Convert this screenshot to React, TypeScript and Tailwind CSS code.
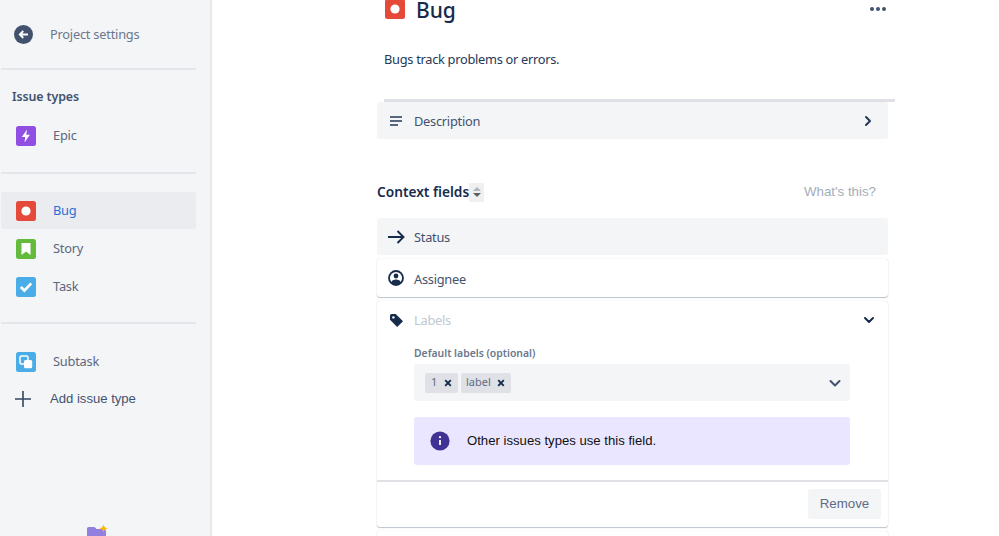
import React from "react";

const Glyph = ({ bg, children }: { bg: string; children: React.ReactNode }) => (
  <svg width="20" height="20" viewBox="0 0 20 20" className="shrink-0">
    <rect width="20" height="20" rx="2.5" fill={bg} />
    {children}
  </svg>
);

const BugIcon = () => (
  <Glyph bg="#e5493a">
    <circle cx="10" cy="10" r="4.6" fill="#fff" />
  </Glyph>
);
const EpicIcon = () => (
  <Glyph bg="#904ee2">
    <path d="M11 3.5 5.8 11h3.4l-.7 5.5 5.4-7.8h-3.6z" fill="#fff" />
  </Glyph>
);
const StoryIcon = () => (
  <Glyph bg="#63ba3c">
    <path d="M5.5 4h9v12L10 12.4 5.5 16z" fill="#fff" />
  </Glyph>
);
const TaskIcon = () => (
  <Glyph bg="#4bade8">
    <path d="m4.8 10 3.6 3.6 6.8-7.2" fill="none" stroke="#fff" strokeWidth="2.8" />
  </Glyph>
);
const SubtaskIcon = () => (
  <Glyph bg="#4bade8">
    <rect x="4" y="4" width="8" height="8" rx="1.5" fill="#4bade8" stroke="#fff" strokeWidth="1.5" />
    <rect x="8" y="8" width="8.2" height="8.2" rx="1.5" fill="#fff" />
  </Glyph>
);

const Divider = ({ className }: { className: string }) => (
  <div className={`ml-px h-[2px] w-[195px] bg-[#e4e6ec] ${className}`} />
);

const Row = ({ icon, label, active, className = "" }: { icon: React.ReactNode; label: string; active?: boolean; className?: string }) => (
  <div className={`ml-px flex h-[37px] w-[195px] items-center rounded-[3px] pl-[15px] ${active ? "bg-[#ebecf0] text-[#2a6fd6]" : "text-[#5b6780]"} ${className}`}>
    {icon}
    <span className="ml-[17px] text-[12.8px] tracking-[-0.2px]">{label}</span>
  </div>
);

const Chevron = ({ d, className }: { d: string; className: string }) => (
  <svg width="12" height="12" viewBox="0 0 12 12" className={className}>
    <path d={d} fill="none" stroke="currentColor" strokeWidth="2" strokeLinecap="round" strokeLinejoin="round" />
  </svg>
);

const Tag = ({ label, className }: { label: string; className: string }) => (
  <div className={`flex h-[20px] items-center rounded-[2px] text-[11px] text-[#5e6c84] ${className}`}>
    <span>{label}</span>
    <svg width="8" height="8" viewBox="0 0 8 8" className="ml-auto">
      <path d="m1.2 1.2 5.6 5.6m0-5.6-5.6 5.6" stroke="#172b4d" strokeWidth="1.9" />
    </svg>
  </div>
);

export default function App() {
  return (
    <div className="flex h-[536px] w-[999px] overflow-hidden bg-white font-['Noto_Sans','Open_Sans',sans-serif] text-[#172b4d]">
      <aside className="relative h-full w-[212px] shrink-0 border-r-2 border-[#e6e8ec] bg-[#f4f5f7]">
        <div className="ml-[14px] mt-[24px] flex h-[20px] items-center">
          <svg width="19" height="19" viewBox="0 0 19 19" className="shrink-0">
            <circle cx="9.5" cy="9.5" r="9.5" fill="#42526e" />
            <path d="M14 9.5H6M9.3 6 5.8 9.5 9.3 13" fill="none" stroke="#fff" strokeWidth="1.8" />
          </svg>
          <span className="ml-[17px] pt-[2px] text-[12.8px] tracking-[-0.22px] text-[#6b778c]">Project settings</span>
        </div>
        <Divider className="mt-[24px]" />
        <div className="ml-[12px] mt-[18px] text-[12.4px] font-semibold leading-[18px] tracking-[-0.1px] text-[#42526e]">Issue types</div>
        <div className="mt-[11px]">
          <Row icon={<EpicIcon />} label="Epic" />
        </div>
        <Divider className="mt-[18px]" />
        <div className="mt-[18px]">
          <Row icon={<BugIcon />} label="Bug" active />
          <Row icon={<StoryIcon />} label="Story" className="mt-[1px]" />
          <Row icon={<TaskIcon />} label="Task" className="mt-[1px]" />
        </div>
        <Divider className="mt-[17px]" />
        <div className="mt-[19px]">
          <Row icon={<SubtaskIcon />} label="Subtask" />
        </div>
        <div className="ml-[14px] flex h-[37px] items-center">
          <svg width="18" height="18" viewBox="0 0 18 18" className="shrink-0">
            <path d="M9 1v16M1 9h16" stroke="#344563" strokeWidth="1.6" />
          </svg>
          <span className="ml-[18px] font-['Liberation_Sans',sans-serif] text-[13.1px] text-[#42526e]">Add issue type</span>
        </div>
        <svg width="24" height="20" viewBox="0 0 24 20" className="absolute left-[86px] top-[524px]">
          <path d="M1 4.5q0-1.5 1.5-1.5h6l2 2H18q2 0 2 2V20H1z" fill="#9180e0" />
          <path d="M17.5 0.5q.6 3.4 4 4-3.4.6-4 4-.6-3.4-4-4 3.4-.6 4-4z" fill="#ffb400" />
        </svg>
      </aside>

      <main className="ml-[165px] w-[519px] shrink-0">
        <div className="relative -mt-[5px] ml-[8px] flex h-[28px] items-center">
          <BugIcon />
          <h1 className="ml-[11px] pt-[2px] text-[21px] font-medium leading-[28px] tracking-[-0.1px]">Bug</h1>
          <div className="absolute left-[485px] top-[12px] flex gap-[2px]">
            <span className="size-[4px] rounded-full bg-[#42526e]" />
            <span className="size-[4px] rounded-full bg-[#42526e]" />
            <span className="size-[4px] rounded-full bg-[#42526e]" />
          </div>
        </div>
        <p className="ml-[7px] mt-[26px] text-[12.8px] leading-[20px] tracking-[-0.28px] text-[#253858]">Bugs track problems or errors.</p>
        <div className="ml-[7px] mt-[30px] h-[3px] w-[511px] bg-[#dfe1e6]" />
        <div className="flex h-[37px] w-[511px] items-center rounded-[3px] bg-[#f4f5f7] pl-[13px] pr-[14px]">
          <svg width="12" height="10" viewBox="0 0 12 10">
            <path d="M0 1h12M0 5h12M0 9h8" stroke="#253858" strokeWidth="1.7" />
          </svg>
          <span className="ml-[12px] pt-[3px] text-[12.8px] tracking-[-0.25px] text-[#42526e]">Description</span>
          <Chevron d="m4 2 4 4-4 4" className="ml-auto text-[#253858]" />
        </div>

        <div className="mt-[42px] flex h-[22px] items-center">
          <h2 className="text-[13.7px] font-semibold text-[#172b4d]">Context fields</h2>
          <div className="flex h-[19px] w-[15px] flex-col items-center justify-center gap-[2px] bg-[#f0f0f0]">
            <span className="h-0 w-0 border-x-[4px] border-b-[4px] border-x-transparent border-b-[#b0b4bb]" />
            <span className="h-0 w-0 border-x-[4px] border-t-[4px] border-x-transparent border-t-[#5c6066]" />
          </div>
          <span className="ml-auto mr-[20px] font-['Liberation_Sans',sans-serif] text-[13.3px] text-[#a5adba]">What's this?</span>
        </div>

        <div className="mt-[15px] flex h-[37px] w-[511px] items-center rounded-[3px] bg-[#f4f5f7] pl-[10px]">
          <svg width="18" height="14" viewBox="0 0 18 14">
            <path d="M1 7h15M10.5 1l6 6-6 6" fill="none" stroke="#172b4d" strokeWidth="1.9" />
          </svg>
          <span className="ml-[9px] pt-[3px] text-[12.8px] tracking-[-0.25px] text-[#42526e]">Status</span>
        </div>

        <div className="mt-[4px] flex h-[38px] w-[511px] items-center rounded-[3px] bg-white pl-[11px] shadow-[0_1px_1px_rgba(9,30,66,0.25),0_0_1px_rgba(9,30,66,0.2)]">
          <svg width="16" height="16" viewBox="0 0 16 16">
            <circle cx="8" cy="8" r="7" fill="#fff" stroke="#172b4d" strokeWidth="1.8" />
            <circle cx="8" cy="6" r="2.4" fill="#172b4d" />
            <path d="M3.2 12.5Q4 9.4 8 9.4t4.8 3.1Q11 15 8 15t-4.8-2.5z" fill="#172b4d" />
          </svg>
          <span className="ml-[10px] pt-[3px] text-[12.8px] tracking-[-0.25px] text-[#42526e]">Assignee</span>
        </div>

        <div className="mt-[4px] h-[226px] w-[511px] rounded-[3px] bg-white shadow-[0_1px_1px_rgba(9,30,66,0.25),0_0_1px_rgba(9,30,66,0.2)]">
          <div className="flex h-[38px] items-center pl-[12px] pr-[13px]">
            <svg width="15" height="15" viewBox="0 0 15 15">
              <path d="M1 2.5Q1 1 2.5 1h4.2L14 8.2 8.2 14 1 6.8z" fill="#172b4d" />
              <circle cx="4.4" cy="4.4" r="1.2" fill="#fff" />
            </svg>
            <span className="ml-[10px] pt-[2px] text-[12.8px] tracking-[-0.25px] text-[#c1c7d0]">Labels</span>
            <Chevron d="m2 4 4 4 4-4" className="ml-auto text-[#172b4d]" />
          </div>
          <div className="ml-[37px] mt-[6px] text-[10.4px] font-semibold leading-[16px] text-[#6b778c]">Default labels (optional)</div>
          <div className="ml-[37px] mt-[3px] flex h-[37px] w-[436px] items-center rounded-[3px] bg-[#f4f5f7] pl-[11px] pr-[9px]">
            <Tag label="1" className="w-[33px] bg-[#dfe1e6] pl-[6px] pr-[6px]" />
            <Tag label="label" className="ml-[3px] w-[50px] bg-[#dfe1e6] pl-[5px] pr-[6px]" />
            <Chevron d="m1.5 4 4.5 4.5L10.5 4" className="ml-auto text-[#42526e]" />
          </div>
          <div className="ml-[37px] mt-[16px] flex h-[48px] w-[436px] items-center rounded-[3px] bg-[#eae6ff] pl-[16px]">
            <svg width="20" height="20" viewBox="0 0 20 20" className="shrink-0">
              <circle cx="10" cy="10" r="9.6" fill="#403294" />
              <path d="M10 9v5" stroke="#fff" strokeWidth="1.8" />
              <circle cx="10" cy="6.2" r="1.1" fill="#fff" />
            </svg>
            <span className="ml-[17px] font-['Liberation_Sans',sans-serif] text-[13.15px] text-[#111]">Other issues types use this field.</span>
          </div>
          <div className="mt-[15px] h-[2px] bg-[#dfe1e6]" />
          <div className="mr-[7px] mt-[7px] flex justify-end">
            <button className="h-[30px] w-[73px] rounded-[3px] bg-[#f4f5f7] font-['Liberation_Sans',sans-serif] text-[13.3px] text-[#5e6c84]">Remove</button>
          </div>
        </div>

        <div className="mt-[4px] h-[40px] w-[511px] rounded-[3px] bg-white shadow-[0_1px_1px_rgba(9,30,66,0.25),0_0_1px_rgba(9,30,66,0.2)]" />
      </main>
    </div>
  );
}
